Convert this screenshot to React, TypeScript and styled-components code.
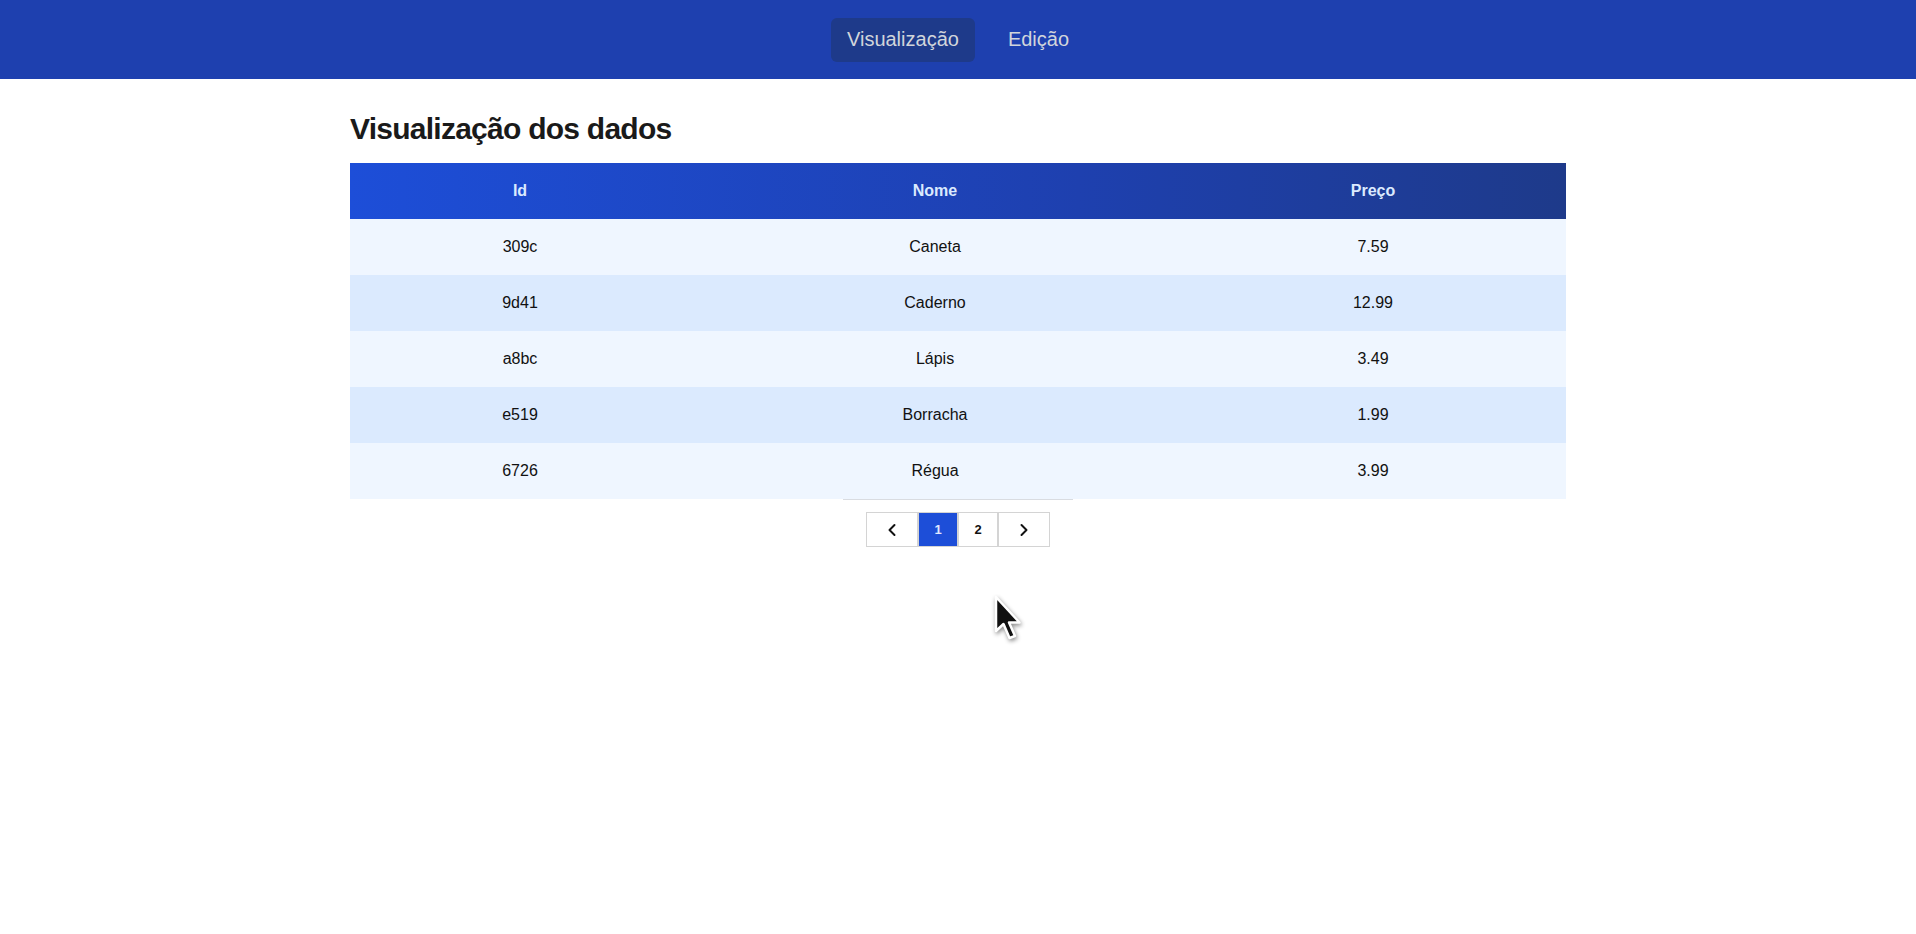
import React, { useState } from 'react';
import styled, { createGlobalStyle } from 'styled-components';

const GlobalStyle = createGlobalStyle`
  body {
    margin: 0;
    background: #ffffff;
    font-family: "Liberation Sans", Arial, sans-serif;
    color: #111111;
  }
`;

interface Product {
  id: string;
  nome: string;
  preco: string;
}

const products: Product[] = [
  { id: '309c', nome: 'Caneta', preco: '7.59' },
  { id: '9d41', nome: 'Caderno', preco: '12.99' },
  { id: 'a8bc', nome: 'Lápis', preco: '3.49' },
  { id: 'e519', nome: 'Borracha', preco: '1.99' },
  { id: '6726', nome: 'Régua', preco: '3.99' },
];

const Page = styled.div`
  position: relative;
  min-height: 934px;
`;

const NavBar = styled.header`
  height: 79px;
  background: #1e40af;
  display: flex;
  align-items: center;
  justify-content: center;
  gap: 17px;
`;

const NavTab = styled.button<{ $active?: boolean }>`
  height: 44px;
  padding: 0 16px;
  border: none;
  border-radius: 6px;
  background: ${p => (p.$active ? '#1e3a8a' : 'transparent')};
  color: #d1d5db;
  font-family: "Liberation Sans", Arial, sans-serif;
  font-size: 20px;
  cursor: pointer;
`;

const Main = styled.main`
  max-width: 1216px;
  margin: 0 auto;
  padding-top: 32px;
`;

const Title = styled.h1`
  margin: 0 0 16px;
  font-size: 30px;
  line-height: 36px;
  font-weight: 700;
  letter-spacing: -0.75px;
  color: #1a1a1a;
`;

const Table = styled.table`
  width: 100%;
  border-collapse: collapse;
  table-layout: fixed;
`;

const HeadRow = styled.tr`
  background: linear-gradient(to right, #1d4ed8, #1e40af 60%, #1e3a8a);
`;

const Th = styled.th<{ $w: number }>`
  width: ${p => p.$w}px;
  height: 56px;
  padding: 0;
  font-size: 16px;
  font-weight: 700;
  color: #dbeafe;
  text-align: center;
`;

const Row = styled.tr<{ $even: boolean }>`
  background: ${p => (p.$even ? '#dbeafe' : '#eff6ff')};
`;

const Td = styled.td`
  height: 56px;
  padding: 0;
  font-size: 16px;
  color: #111111;
  text-align: center;
`;

const Pager = styled.nav`
  display: flex;
  justify-content: center;
  width: fit-content;
  margin: 0 auto;
  padding: 12px 23px 0;
  border-top: 1px solid #d9dce1;
`;

const PageButton = styled.button<{ $active?: boolean; $wide?: boolean }>`
  width: ${p => (p.$wide ? 52 : 40)}px;
  height: 35px;
  padding: 0;
  display: flex;
  align-items: center;
  justify-content: center;
  border: 1px solid #d4d4d4;
  background: ${p => (p.$active ? '#1d4ed8' : '#ffffff')};
  color: ${p => (p.$active ? '#e0e7ff' : '#111111')};
  font-family: "Liberation Sans", Arial, sans-serif;
  font-size: 13px;
  font-weight: 700;
  cursor: pointer;
`;

const Cursor = styled.svg`
  position: absolute;
  left: 990px;
  top: 593px;
  filter: drop-shadow(1px 2px 2px rgba(0, 0, 0, 0.45));
  pointer-events: none;
`;

const Chevron = ({ dir }: { dir: 'left' | 'right' }) => (
  <svg width="10" height="14" viewBox="0 0 10 14" fill="none" stroke="#111" strokeWidth="2" strokeLinecap="round" strokeLinejoin="round">
    <polyline points={dir === 'left' ? '7.5 2 2.5 7 7.5 12' : '2.5 2 7.5 7 2.5 12'} />
  </svg>
);

export default function App() {
  const [tab, setTab] = useState('view');
  const [page, setPage] = useState(1);

  return (
    <Page>
      <GlobalStyle />
      <NavBar>
        <NavTab $active={tab === 'view'} onClick={() => setTab('view')}>Visualização</NavTab>
        <NavTab $active={tab === 'edit'} onClick={() => setTab('edit')}>Edição</NavTab>
      </NavBar>
      <Main>
        <Title>Visualização dos dados</Title>
        <Table>
          <thead>
            <HeadRow>
              <Th $w={340}>Id</Th>
              <Th $w={490}>Nome</Th>
              <Th $w={386}>Preço</Th>
            </HeadRow>
          </thead>
          <tbody>
            {products.map((p, i) => (
              <Row key={p.id} $even={i % 2 === 1}>
                <Td>{p.id}</Td>
                <Td>{p.nome}</Td>
                <Td>{p.preco}</Td>
              </Row>
            ))}
          </tbody>
        </Table>
        <Pager>
          <PageButton $wide onClick={() => setPage(1)}><Chevron dir="left" /></PageButton>
          <PageButton $active={page === 1} onClick={() => setPage(1)}>1</PageButton>
          <PageButton $active={page === 2} onClick={() => setPage(2)}>2</PageButton>
          <PageButton $wide onClick={() => setPage(2)}><Chevron dir="right" /></PageButton>
        </Pager>
      </Main>
      <Cursor width="40" height="56" viewBox="0 0 40 56">
        <path d="M6 4 L6 38 L13.5 31 L19.5 45 L25 43 L19 29.5 L29.5 29.5 Z" fill="#111" stroke="#fff" strokeWidth="2.5" strokeLinejoin="round" />
      </Cursor>
    </Page>
  );
}
